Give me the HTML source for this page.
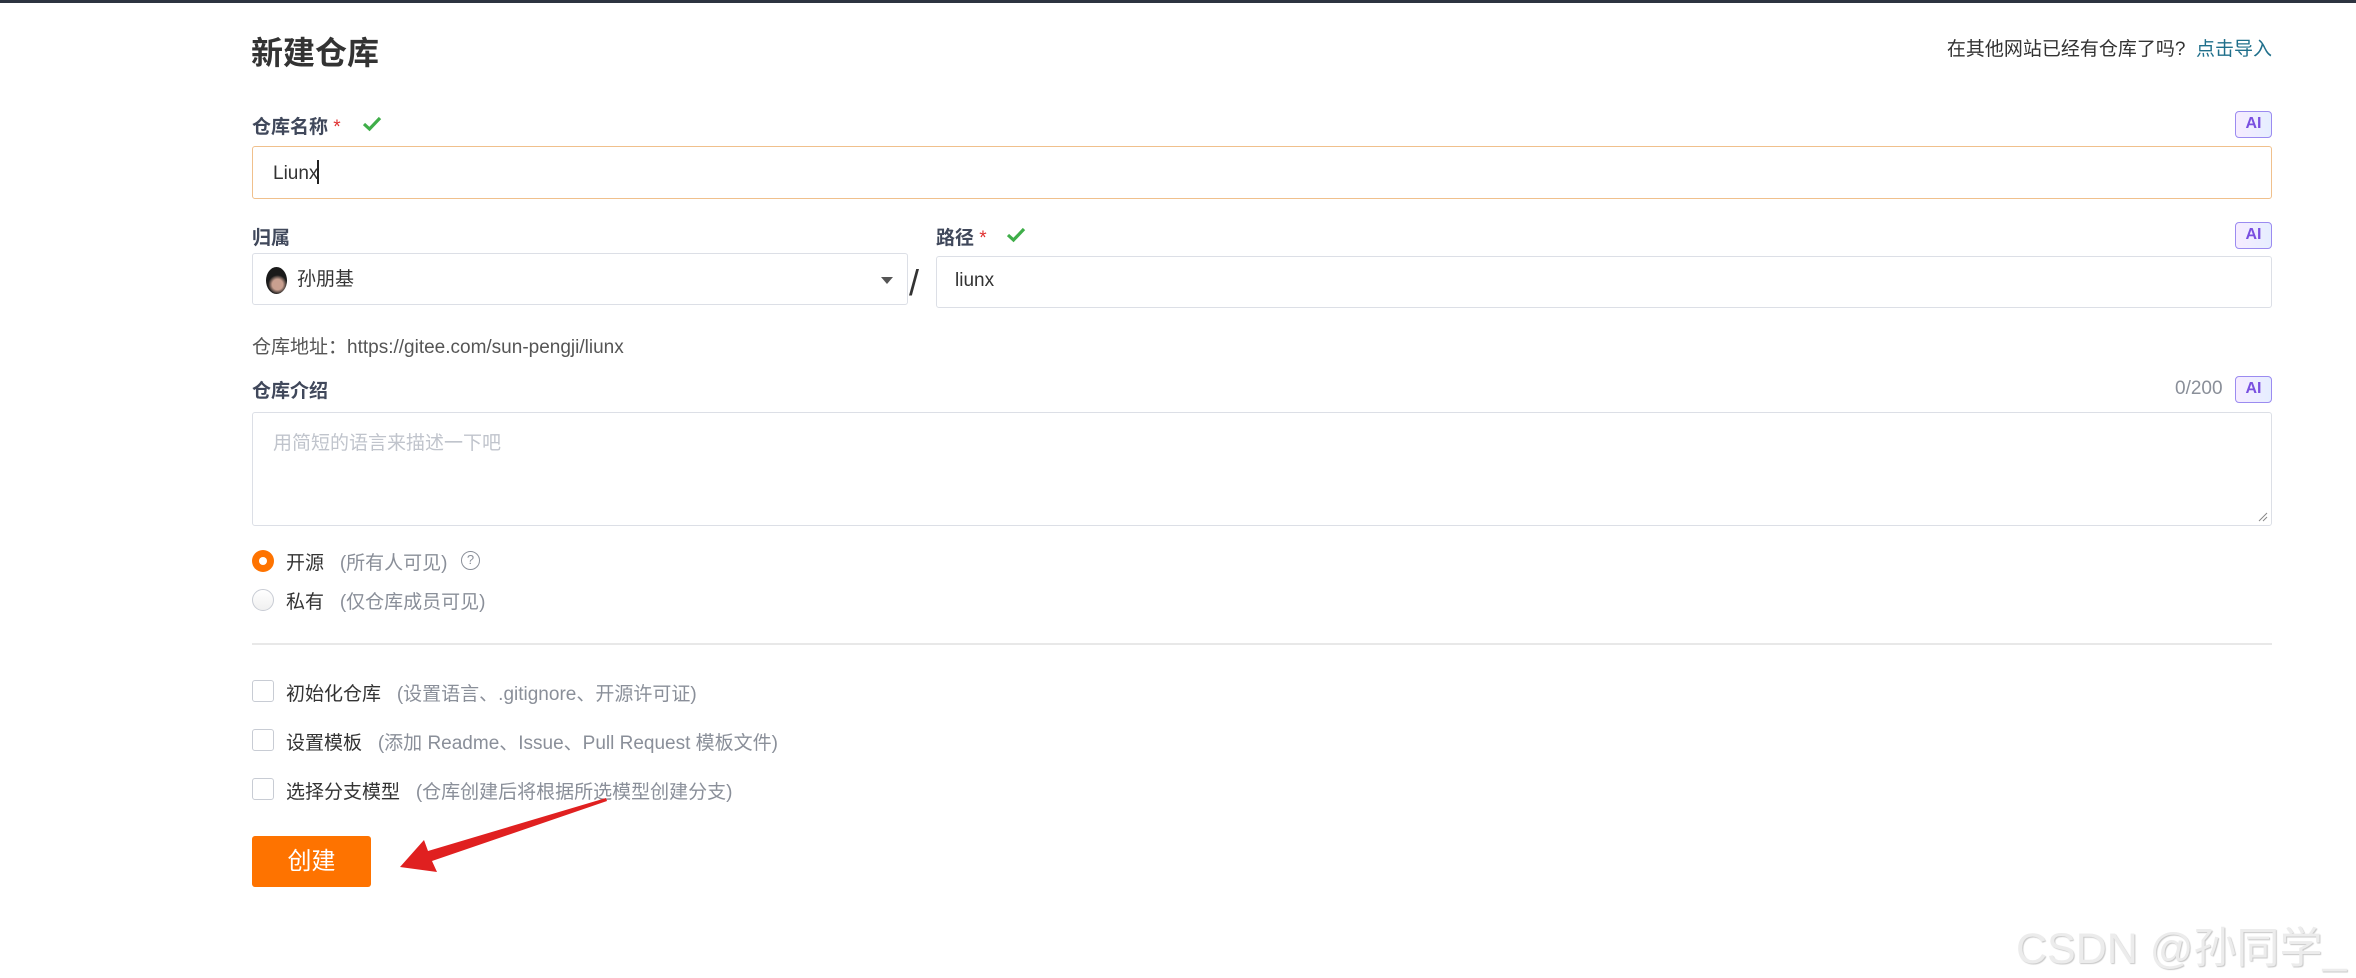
<!DOCTYPE html>
<html><head><meta charset="utf-8"><style>
*{box-sizing:border-box;margin:0;padding:0}
body{width:2356px;height:978px;background:#fff;position:relative;overflow:hidden;font-family:"Liberation Sans","Noto Sans CJK SC",sans-serif;color:#40485b;font-size:19px}
.a{position:absolute;white-space:nowrap}
.lbl{font-weight:bold;font-size:19px;color:#40485b}
.in{position:absolute;border:1.5px solid #dcdfe6;border-radius:3px;background:#fff}
.ai{position:absolute;width:37px;height:27px;border:1.5px solid #9b8bf0;border-radius:4px;background:linear-gradient(90deg,#f6ecff,#e6eeff);font-weight:bold;font-size:16px;color:#7a4fe0;text-align:center;line-height:24px}
.req{color:#e03030;font-weight:normal}
.chk{position:absolute;width:22px;height:22px;border:1.5px solid #c8ccd4;border-radius:3px;background:#fff}
.g{color:#8a8f99}
</style></head><body>
<div class="a" style="left:0;top:0;width:2356px;height:3px;background:#2d3440"></div>
<div class="a" style="left:251px;top:28px;font-size:32px;font-weight:bold;color:#333">新建仓库</div>
<div class="a" style="right:84px;top:34px;font-size:19px;color:#333">在其他网站已经有仓库了吗?&nbsp; <span style="color:#1f6f8b">点击导入</span></div>

<div class="a lbl" style="left:252px;top:112px">仓库名称 <span class="req">*</span></div>
<svg class="a" style="left:362px;top:115px" width="20" height="18" viewBox="0 0 20 18"><path d="M2 9 L7.5 14 L18 3" stroke="#3fae49" stroke-width="3.2" fill="none"/></svg>
<div class="ai" style="left:2235px;top:111px">AI</div>
<div class="in" style="left:252px;top:146px;width:2020px;height:53px;border-color:#f0c08c"></div>
<div class="a" style="left:273px;top:160px;font-size:19px;color:#333">Liunx<span style="display:inline-block;width:2px;height:24px;background:#222;vertical-align:-5px;margin-left:-1px"></span></div>

<div class="a lbl" style="left:252px;top:223px">归属</div>
<div class="in" style="left:252px;top:253px;width:656px;height:52px"></div>
<div class="a" style="left:266px;top:267px;width:21px;height:27px;border-radius:50%;background:radial-gradient(circle at 55% 65%,#c9a090 0 25%,#1a1a1a 45%)"></div>
<div class="a" style="left:297px;top:264px;font-size:19px;color:#333">孙朋基</div>
<div class="a" style="left:881px;top:277px;width:0;height:0;border-left:6px solid transparent;border-right:6px solid transparent;border-top:7px solid #555"></div>
<div class="a" style="left:909px;top:262px;font-size:36px;color:#333;font-weight:300">/</div>

<div class="a lbl" style="left:936px;top:223px">路径 <span class="req">*</span></div>
<svg class="a" style="left:1006px;top:226px" width="20" height="18" viewBox="0 0 20 18"><path d="M2 9 L7.5 14 L18 3" stroke="#3fae49" stroke-width="3.2" fill="none"/></svg>
<div class="ai" style="left:2235px;top:222px">AI</div>
<div class="in" style="left:936px;top:256px;width:1336px;height:52px"></div>
<div class="a" style="left:955px;top:270px;font-size:19px;color:#333">liunx</div>

<div class="a" style="left:252px;top:332px;font-size:19px;color:#555">仓库地址：https://gitee.com/sun-pengji/liunx</div>

<div class="a lbl" style="left:252px;top:376px">仓库介绍</div>
<div class="a g" style="left:2175px;top:378px;font-size:19px">0/200</div>
<div class="ai" style="left:2235px;top:376px">AI</div>
<div class="in" style="left:252px;top:412px;width:2020px;height:114px"></div>
<div class="a" style="left:273px;top:428px;font-size:19px;color:#c0c4cc">用简短的语言来描述一下吧</div>
<svg class="a" style="left:2258px;top:512px" width="10" height="10"><path d="M1 9L9 1M5 9L9 5" stroke="#888" stroke-width="1"/></svg>

<div class="a" style="left:252px;top:550px;width:22px;height:22px;border-radius:50%;background:#fe7300"></div>
<div class="a" style="left:259px;top:557px;width:8px;height:8px;border-radius:50%;background:#fff"></div>
<div class="a" style="left:286px;top:548px;font-size:19px;color:#333">开源 &nbsp;&nbsp;<span class="g">(所有人可见)</span></div>
<div class="a" style="left:461px;top:551px;width:19px;height:19px;border:1.5px solid #8a8f99;border-radius:50%;font-size:13px;color:#8a8f99;text-align:center;line-height:16px">?</div>
<div class="a" style="left:252px;top:589px;width:22px;height:22px;border-radius:50%;border:1.5px solid #c8ccd4;background:linear-gradient(#fff,#f0f0f0)"></div>
<div class="a" style="left:286px;top:587px;font-size:19px;color:#333">私有 &nbsp;&nbsp;<span class="g">(仅仓库成员可见)</span></div>

<div class="a" style="left:252px;top:643px;width:2020px;height:2px;background:#e8e8e8"></div>

<div class="chk" style="left:252px;top:680px"></div>
<div class="a" style="left:286px;top:679px;font-size:19px;color:#333">初始化仓库 &nbsp;&nbsp;<span class="g">(设置语言、.gitignore、开源许可证)</span></div>
<div class="chk" style="left:252px;top:729px"></div>
<div class="a" style="left:286px;top:728px;font-size:19px;color:#333">设置模板 &nbsp;&nbsp;<span class="g">(添加 Readme、Issue、Pull Request 模板文件)</span></div>
<div class="chk" style="left:252px;top:778px"></div>
<div class="a" style="left:286px;top:777px;font-size:19px;color:#333">选择分支模型 &nbsp;&nbsp;<span class="g">(仓库创建后将根据所选模型创建分支)</span></div>

<div class="a" style="left:252px;top:836px;width:119px;height:51px;background:#fe7300;border-radius:3px;color:#fff;font-size:24px;text-align:center;line-height:51px">创建</div>

<svg class="a" style="left:0;top:0" width="2356" height="978"><path d="M606 798 L607 801 L432 861 L437 872 L400 867 L424 840 L428 851 Z" fill="#e02020"/></svg>

<div class="a" style="left:2016px;top:914px;font-size:43px;color:#ececec;text-shadow:1px 1px 1px #c8c8c8">CSDN @孙同学_</div>
</body></html>
